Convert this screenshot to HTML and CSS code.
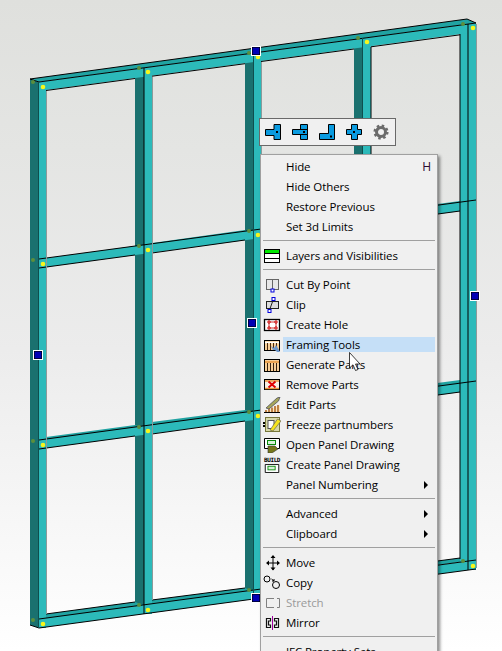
FILE: index.html
```html
<!DOCTYPE html>
<html lang="en">
<head>
<meta charset="UTF-8">
<meta name="viewport" content="width=device-width, initial-scale=1.0">
<title>Panel context menu</title>
<link rel="stylesheet" href="styles.css">
</head>
<body>

<div class="viewport">

<!-- wall panel -->
<svg class="model" width="502" height="651" viewBox="0 0 502 651">
    <defs>
        <g id="grip">
            <rect class="grip-outer" x=".5" y=".5" width="9" height="9"/>
            <rect class="grip-inner" x="1.300" y="1.300" width="7.400" height="7.400"/>
        </g>
    </defs>
    <g class="side">
        <polygon points="30,79 39,82 39,628 30,625"/>
        <polygon points="135,65 144,68 144,614 135,611"/>
        <polygon points="245,50 254,53 254,599 245,596"/>
        <polygon points="354,35 363,38 363,584 354,581"/>
    </g>
    <g class="top">
        <polygon points="30,79 467,19 476,23 39,82"/>
        <polygon points="46,259 135,246 144,248 46,262"/>
        <polygon points="152,243 245,230 254,233 152,247"/>
        <polygon points="261,228 354,215 363,218 261,232"/>
        <polygon points="46,437 135,425 144,428 46,441"/>
        <polygon points="152,422 245,410 254,413 152,426"/>
        <polygon points="261,408 354,395 363,398 261,411"/>
        <polygon points="46,614 135,602 144,605 46,619"/>
        <polygon points="152,600 245,588 254,591 152,604"/>
        <polygon points="261,585 354,573 363,576 261,589"/>
        <polygon points="370,570 460,558 468,561 370,574"/>
        <polygon points="370,392 460,380 468,383 370,396"/>
        <polygon points="370,213 460,201 468,204 370,217"/>
    </g>
    <g class="face">
        <rect x="39" y="82" width="7" height="546"/>
        <rect x="144" y="68" width="8" height="546"/>
        <rect x="254" y="53" width="7" height="546"/>
        <rect x="363" y="38" width="8" height="546"/>
        <rect x="460" y="24" width="16" height="546"/>
        <polygon points="39,82 476,23 476,32 39,91"/>
        <polygon points="39,259 476,200 476,209 39,268"/>
        <polygon points="39,440 476,381 476,390 39,449"/>
        <polygon points="39,619 476,560 476,569 39,628"/>
    </g>
    <g class="edge">
        <path d="M30 79L467 19L476 23L39 82L30 79"/>
        <path d="M46 90.500L135 78.500M152 76.200L245 63.700M261 61.500L354 49M371 46.800L460 34.800"/>
        <path d="M144 68V614M371 47V224M468 24V570M460 34V559"/>
        <path d="M39 259L476 200M39 268L135 255M152 253L245 240M261 238L354 225M371 223L460 211"/>
        <path d="M39 440L476 381M39 449L135 436M152 434L245 421M261 419L354 406M371 404L460 392"/>
        <path d="M39 619L476 560M46 614L135 602M152 600L245 588M261 585L354 573M370 570L460 558"/>
        <path d="M30 625L39 628L476 569"/>
    </g>
    <g class="edge-soft">
        <path d="M38.500 82V628M253.500 53V599M362.500 38V584"/>
    </g>
    <g class="rim">
        <path d="M46.500 91V614M152.500 77V600M261.500 62V585M476.500 24V568"/>
    </g>
    <g class="back-node">
        <circle cx="33" cy="82" r="2"/><circle cx="139" cy="68" r="2"/><circle cx="249" cy="53" r="2"/><circle cx="358" cy="38" r="2"/><circle cx="463" cy="24" r="2"/>
        <circle cx="33" cy="260" r="2"/><circle cx="139" cy="246" r="2"/><circle cx="249" cy="231" r="2"/>
        <circle cx="33" cy="441" r="2"/><circle cx="139" cy="427" r="2"/><circle cx="249" cy="412" r="2"/>
        <circle cx="33" cy="620" r="2"/><circle cx="139" cy="605" r="2"/><circle cx="249" cy="590" r="2"/><circle cx="463" cy="561" r="2"/>
    </g>
    <g class="node">
        <circle cx="43" cy="87" r="2.300"/><circle cx="148" cy="72" r="2.300"/><circle cx="258" cy="57" r="2.300"/><circle cx="367" cy="42" r="2.300"/><circle cx="473" cy="28" r="2.300"/>
        <circle cx="43" cy="264" r="2.300"/><circle cx="148" cy="250" r="2.300"/><circle cx="258" cy="235" r="2.300"/>
        <circle cx="43" cy="445" r="2.300"/><circle cx="148" cy="431" r="2.300"/><circle cx="258" cy="416" r="2.300"/>
        <circle cx="43" cy="624" r="2.300"/><circle cx="148" cy="610" r="2.300"/><circle cx="473" cy="566" r="2.300"/>
    </g>
    <use href="#grip" x="251" y="46"/>
    <use href="#grip" x="247" y="318"/>
    <use href="#grip" x="33" y="350"/>
    <use href="#grip" x="470" y="291"/>
    <use href="#grip" x="251" y="593"/>
</svg>

<!-- mini toolbar above the menu -->
<div class="toolbar">
    <svg class="tool" viewBox="0 0 16 16"><path d="M9 .5H15.500V15.500H9V11.500H.5V5.500H9Z"/><rect class="dot" x="11" y="7" width="2" height="2"/></svg>
    <svg class="tool" viewBox="0 0 16 16"><path d="M8.500 .5H15.500V15.500H8.500Z"/><path d="M.5 5.500H15.500V10.500H.5Z"/><rect class="dot" x="11" y="7" width="2" height="2"/></svg>
    <svg class="tool" viewBox="0 0 16 16"><path d="M9.500 .5H15.500V15.500H.5V9.500H9.500Z"/><rect class="dot" x="11" y="11.500" width="2" height="2"/></svg>
    <svg class="tool" viewBox="0 0 16 16"><path d="M5.500 .5H11.500V5.500H15.500V10.500H11.500V15.500H5.500V10.500H.5V5.500H5.500Z"/><rect class="dot" x="7" y="7" width="2" height="2"/></svg>
    <svg class="tool gear" viewBox="0 0 16 16"><circle cx="8" cy="8" r="4.500"/><circle class="teeth" cx="8" cy="8" r="6.300"/></svg>
</div>

<!-- context menu, runs off the bottom of the window -->
<div class="menu">
    <div class="row"><span class="icon"></span><span class="label">Hide</span><span class="key">H</span></div>
    <div class="row"><span class="icon"></span><span class="label">Hide Others</span></div>
    <div class="row"><span class="icon"></span><span class="label">Restore Previous</span></div>
    <div class="row"><span class="icon"></span><span class="label">Set 3d Limits</span></div>
    <div class="sep"></div>
    <div class="row"><span class="icon"><svg viewBox="0 0 18 16"><rect x="1.500" y="1.500" width="15" height="13" fill="#fff" stroke="#000"/><rect x="2" y="2" width="14" height="3" fill="#00e800"/><path d="M1.500 5.500H16.500M1.500 10.500H16.500" stroke="#000"/></svg></span><span class="label">Layers and Visibilities</span></div>
    <div class="sep"></div>
    <div class="row"><span class="icon"><svg viewBox="0 0 18 16"><rect x="3.500" y="2.500" width="12" height="10" fill="#e8e8e8" stroke="#666"/><path d="M9.500 2V12" stroke="#666"/><rect x="8" y="12" width="3" height="3" fill="#fff" stroke="#00d"/></svg></span><span class="label">Cut By Point</span></div>
    <div class="row"><span class="icon"><svg viewBox="0 0 18 16"><rect x="3.500" y="4.500" width="12" height="7" fill="#ddd" stroke="#222"/><path d="M6.500 13L10.500 2" stroke="#222"/><rect x="9" y=".5" width="3" height="3" fill="#fff" stroke="#00d"/><rect x="5" y="12.500" width="3" height="3" fill="#fff" stroke="#00d"/></svg></span><span class="label">Clip</span></div>
    <div class="row"><span class="icon"><svg viewBox="0 0 18 16"><rect x="1.500" y="2.500" width="15" height="11" fill="#fff" stroke="#000" stroke-width="1.300"/><path d="M6 5H13V11H6Z" fill="none" stroke="#c33"/><path d="M5 4H7V6H5ZM12 4H14V6H12ZM5 10H7V12H5ZM12 10H14V12H12Z" fill="#fff" stroke="#c00"/></svg></span><span class="label">Create Hole</span></div>
    <div class="row"><span class="icon"><svg viewBox="0 0 18 16"><rect x="1.500" y="3.500" width="15" height="10" fill="#f8cf98" stroke="#000"/><path d="M2 5.500H16" stroke="#fff" stroke-width="1.500"/><path d="M4.500 6V13M7.500 6V13M10.500 6V13M13.500 6V13" stroke="#4a2a10"/><path d="M8 9L11 11L13 8L16 13L17 15L14 15L12 13L10 13Z" fill="#6f98cc"/></svg></span><span class="label active">Framing Tools</span></div>
    <div class="row"><span class="icon"><svg viewBox="0 0 18 16"><rect x="1.500" y="2.500" width="15" height="12" fill="#f8cf98" stroke="#000"/><path d="M2 5H16" stroke="#e8963c" stroke-width="1.500"/><path d="M4.500 6V14M7.500 6V14M10.500 6V14M13.500 6V14" stroke="#3a2410"/></svg></span><span class="label">Generate Parts</span></div>
    <div class="row"><span class="icon"><svg viewBox="0 0 18 16"><rect x="1.500" y="2.500" width="15" height="10" fill="#f8f0e4" stroke="#000"/><path d="M2 4H16M2 11.500H16" stroke="#e8963c" stroke-width="1.400"/><path d="M5.500 4.500L12.500 10.500M12.500 4.500L5.500 10.500" stroke="#e00000" stroke-width="2"/></svg></span><span class="label">Remove Parts</span></div>
    <div class="row"><span class="icon"><svg viewBox="0 0 18 16"><path d="M1 15H17V8L1 15Z" fill="#f8e4c0"/><path d="M3 15V13M6 15V11.500M9 15V10.500M12 15V9M15 15V8" stroke="#a85a10" stroke-width="1.400"/><path d="M1 15.500H17" stroke="#000"/><path d="M3 11L14 1L17 0L15.500 4L6 12Z" fill="#a6a65a" stroke="#445" stroke-width=".7"/></svg></span><span class="label">Edit Parts</span></div>
    <div class="row"><span class="icon"><svg viewBox="0 0 18 16"><rect x="2.500" y=".5" width="14" height="14" fill="#d8d8a8" stroke="#77773a"/><path d="M1 5V11" stroke="#000" stroke-width="2" stroke-dasharray="2 1"/><rect x="5" y="3.500" width="6" height="8" fill="#fff" stroke="#555"/><path d="M7 13L14.500 2L18 4L10 14Z" fill="#f6e41c" stroke="#555" stroke-width=".6"/></svg></span><span class="label">Freeze partnumbers</span></div>
    <div class="row"><span class="icon"><svg viewBox="0 0 18 16"><path d="M1.500 1.500H16.500V11.500H1.500Z" fill="#fff" stroke="#000"/><rect x="4.500" y="3.500" width="8" height="4" fill="#d8f0d8" stroke="#0a8a0a"/><path d="M5 9H12L15 12L9 16H5Z" fill="#77771a" stroke="#333" stroke-width=".6"/></svg></span><span class="label">Open Panel Drawing</span></div>
    <div class="row"><span class="icon build"><span class="build-text">BUILD</span><svg viewBox="0 0 18 10"><path d="M1.500 .5H16.500V9.500H1.500Z" fill="#fff" stroke="#000"/><rect x="4.500" y="2.500" width="8" height="4" fill="#d8f0d8" stroke="#0a8a0a"/></svg></span><span class="label">Create Panel Drawing</span></div>
    <div class="row"><span class="icon"></span><span class="label">Panel Numbering</span><span class="arrow"></span></div>
    <div class="sep"></div>
    <div class="row"><span class="icon"></span><span class="label">Advanced</span><span class="arrow"></span></div>
    <div class="row"><span class="icon"></span><span class="label">Clipboard</span><span class="arrow"></span></div>
    <div class="sep"></div>
    <div class="row"><span class="icon"><svg viewBox="0 0 18 16"><path d="M10 1V15M4 8H16" stroke="#000"/><path d="M10 0L12.500 3H7.500ZM10 15.500L12.500 12.500H7.500ZM3 8L6 5.500V10.500ZM17 8L14 5.500V10.500Z"/></svg></span><span class="label">Move</span></div>
    <div class="row"><span class="icon"><svg viewBox="0 0 18 16" fill="none" stroke="#000"><circle cx="4" cy="4" r="3"/><circle cx="13" cy="10" r="3.500"/><path d="M8.500 4L11 6M11 4V6H9"/></svg></span><span class="label">Copy</span></div>
    <div class="row"><span class="icon"><svg viewBox="0 0 18 16" fill="none" stroke="#808080"><path d="M11 3.500H3.500V12.500H11M14 3.500H16.500V12.500H14"/></svg></span><span class="label disabled">Stretch</span></div>
    <div class="row"><span class="icon"><svg viewBox="0 0 18 16" fill="none" stroke="#111" stroke-width="1.200"><path d="M7.500 3.500H3.500V12.500H7.500V10H5.500V6H7.500ZM11.500 3.500H15.500V12.500H11.500V10H13.500V6H11.500Z"/><path d="M9.500 1V15" stroke="#a000a0" stroke-width="1"/></svg></span><span class="label">Mirror</span></div>
    <div class="sep"></div>
    <div class="row"><span class="icon"></span><span class="label">IFC Property Sets</span></div>
</div>

<!-- mouse cursor -->
<svg class="cursor" width="14" height="20" viewBox="0 0 14 20"><path d="M.5 .5V16L4 12.800L6.500 18.500L9 17.500L6.500 12H11Z" fill="#fff" stroke="#000" stroke-opacity=".75"/></svg>

</div>

</body>
</html>
```

FILE: styles.css
```css
html, body {
    margin: 0;
    padding: 0;
}

.viewport {
    position: relative;
    width: 502px;
    height: 651px;
    overflow: hidden;
    background: linear-gradient(#dfe0dd 0, #e4e5e3 150px, #ececec 350px, #f8f8f8 540px, #ffffff 651px);
    font-family: "Open Sans", "Noto Sans", sans-serif;
    font-size: 11.5px;
    letter-spacing: -0.1px;
    color: #000;
}

/* model drawing */
.model {
    position: absolute;
    left: 0;
    top: 0;
}

.side polygon {
    fill: #1a716f;
}

.top polygon {
    fill: #21a3a2;
}

.face rect, .face polygon {
    fill: #2cbaba;
}

.edge path {
    fill: none;
    stroke: #000;
    stroke-width: 1;
}

.edge-soft path {
    fill: none;
    stroke: #0e4f4e;
    stroke-width: 1;
}

.rim path {
    fill: none;
    stroke: #8c9a9a;
    stroke-width: 1;
}

.back-node circle {
    fill: #5c8f3c;
}

.node circle {
    fill: #f6f61c;
}

.grip-outer {
    fill: #0000b4;
    stroke: #fff;
}

.grip-inner {
    fill: #0000b4;
    stroke: #000;
    stroke-width: 0.6;
}

/* toolbar */
.toolbar {
    position: absolute;
    left: 259px;
    top: 118px;
    width: 130px;
    height: 26px;
    display: flex;
    align-items: center;
    gap: 11px;
    padding: 0 0 0 5px;
    background-color: #f0f0f0;
    border: 1px solid #696969;
}

.tool {
    width: 16px;
    height: 16px;
    flex: none;
}

.tool path {
    fill: #0a9be0;
    stroke: #000;
    stroke-width: 1;
}

.tool .dot {
    fill: #000;
}

.gear circle {
    fill: none;
    stroke: #6b6b6b;
    stroke-width: 3;
}

.gear .teeth {
    stroke-width: 2.500;
    stroke-dasharray: 2.470 2.470;
}

/* context menu */
.menu {
    position: absolute;
    left: 260px;
    top: 154px;
    width: 176px;
    padding: 2px 0 0;
    background-color: #f0f0f0;
    border: 1px solid #a0a0a0;
    box-shadow: 2px 2px 3px rgba(0, 0, 0, 0.45);
}

.row {
    position: relative;
    display: flex;
    height: 20px;
    padding-left: 1px;
}

.icon {
    width: 18px;
    height: 16px;
    margin: 2px 2px 0 0;
    flex: none;
    padding-left: 1px;
}

.icon svg {
    display: block;
    width: 18px;
    height: 16px;
}

.build {
    display: flex;
    flex-direction: column;
}

.build svg {
    height: 10px;
    margin-top: 1px;
}

.build-text {
    margin-left: 1px;
    font-family: "DejaVu Sans Mono", monospace;
    font-size: 6px;
    font-weight: bold;
    line-height: 6px;
    letter-spacing: -0.4px;
}

.label {
    flex: 1;
    height: 15px;
    margin: 2px 2px 0 0;
    padding-left: 3px;
    line-height: 15px;
    white-space: nowrap;
}

.active {
    background-color: #c5dff7;
}

.disabled {
    color: #9a9a9a;
}

.key {
    position: absolute;
    right: 6px;
    top: 2px;
    font-size: 12px;
    line-height: 15px;
    color: #2a0a30;
}

.arrow {
    position: absolute;
    right: 9px;
    top: 6px;
    width: 0;
    height: 0;
    border-left: 4px solid #000;
    border-top: 4px solid transparent;
    border-bottom: 4px solid transparent;
}

.sep {
    height: 1px;
    margin: 3px 2px 5px 2px;
    background-color: #a0a0a0;
}

.cursor {
    position: absolute;
    left: 349px;
    top: 352px;
}
```
